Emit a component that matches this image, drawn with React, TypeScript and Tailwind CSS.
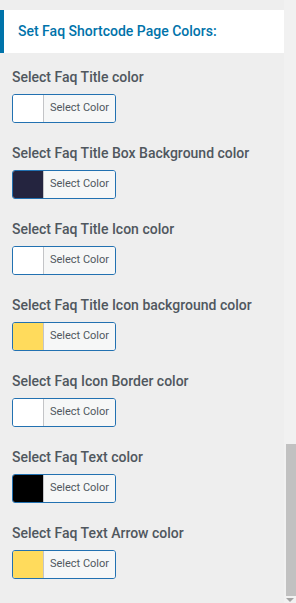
import React from 'react';

const fields: { label: string; color: string }[] = [
    { label: 'Select Faq Title color', color: '#ffffff' },
    { label: 'Select Faq Title Box Background color', color: '#24243f' },
    { label: 'Select Faq Title Icon color', color: '#ffffff' },
    { label: 'Select Faq Title Icon background color', color: '#ffdb5c' },
    { label: 'Select Faq Icon Border color', color: '#ffffff' },
    { label: 'Select Faq Text color', color: '#000000' },
    { label: 'Select Faq Text Arrow color', color: '#ffdb5c' },
];

function ColorPicker(props: { color: string }): JSX.Element {
    return (
        <div className="flex h-[29px] w-[104px] overflow-hidden rounded-[3px] border border-[#2271b1]">
            <div className="w-[30px] shrink-0" style={{ background: props.color }} />
            <div className="flex flex-1 items-center justify-center border-l border-[#c3c4c7] bg-[#f6f7f7] text-[11px] text-[#50575e]">
                Select Color
            </div>
        </div>
    );
}

export default function App(): JSX.Element {
    return (
        <div
            className="flex h-[603px] w-[296px] overflow-hidden bg-[#eeeeee]"
            style={{ fontFamily: 'Roboto, "Liberation Sans", sans-serif' }}
        >
            <div className="flex flex-1 flex-col pt-[10px]">
                <div className="flex h-[43px] items-center border-l-4 border-[#0073aa] bg-white pl-[14px] text-[14px] font-medium text-[#0073aa]">
                    Set Faq Shortcode Page Colors:
                </div>
                <div className="flex flex-col gap-[20px] pl-[12px] pt-[14px]">
                    {fields.map((f) => (
                        <div key={f.label} className="flex flex-col gap-[7px]">
                            <div className="text-[14px] font-medium leading-[20px] text-[#50575e]">
                                {f.label}
                            </div>
                            <ColorPicker color={f.color} />
                        </div>
                    ))}
                </div>
            </div>
            <div className="flex w-[12px] flex-col bg-[#f1f1f1]">
                <div className="h-[444px]" />
                <div className="ml-[2px] h-[152px] bg-[#c1c1c1]" />
                <div className="flex flex-1 items-center justify-center">
                    <div className="h-0 w-0 border-x-[4px] border-t-[4px] border-x-transparent border-t-[#a3a3a3]" />
                </div>
            </div>
        </div>
    );
}
